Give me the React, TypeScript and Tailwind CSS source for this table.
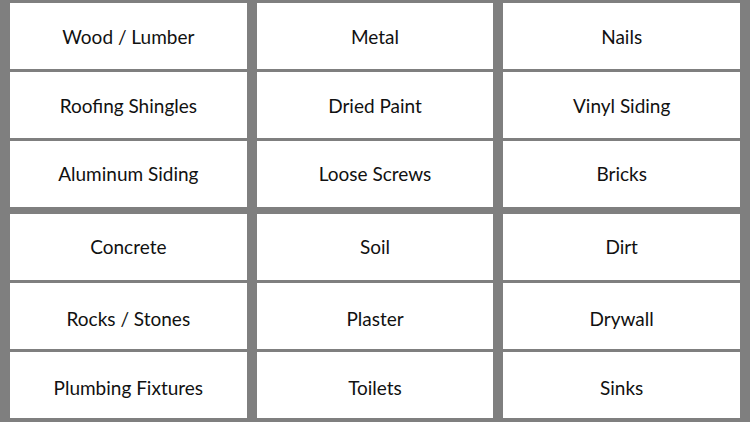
const groups: string[][][] = [
  [
    ["Wood / Lumber", "Metal", "Nails"],
    ["Roofing Shingles", "Dried Paint", "Vinyl Siding"],
    ["Aluminum Siding", "Loose Screws", "Bricks"]
  ],
  [
    ["Concrete", "Soil", "Dirt"],
    ["Rocks / Stones", "Plaster", "Drywall"],
    ["Plumbing Fixtures", "Toilets", "Sinks"]
  ]
];

// labels in the lower rows sit a little below centre in the picture
const rowPad = [
  ["pt-[2px]", "pt-[2px]", "pt-0"],
  ["pt-[2px]", "pt-[8px]", "pt-[7px]"]
];

function Cell({ label, pad }: { label: string; pad: string }) {
  return (
    <div className={`flex items-center justify-center bg-white text-[19px] text-[#111] ${pad}`}>
      {label}
    </div>
  );
}

export default function App() {
  return (
    <div
      className="flex h-screen w-full flex-col gap-[6px] bg-[#7f7f7f] pb-[4px] pl-[10px] pr-[10px] pt-[3px]"
      style={{ fontFamily: "Lato, 'Liberation Sans', sans-serif" }}
    >
      {groups.map((rows, gi) => (
        <div key={gi} className="grid flex-1 grid-rows-3 gap-y-[3px]">
          {rows.map((row, ri) => (
            <div key={ri} className="grid grid-cols-3 gap-x-[10px]">
              {row.map((label) => (
                <Cell key={label} label={label} pad={rowPad[gi][ri]} />
              ))}
            </div>
          ))}
        </div>
      ))}
    </div>
  );
}
